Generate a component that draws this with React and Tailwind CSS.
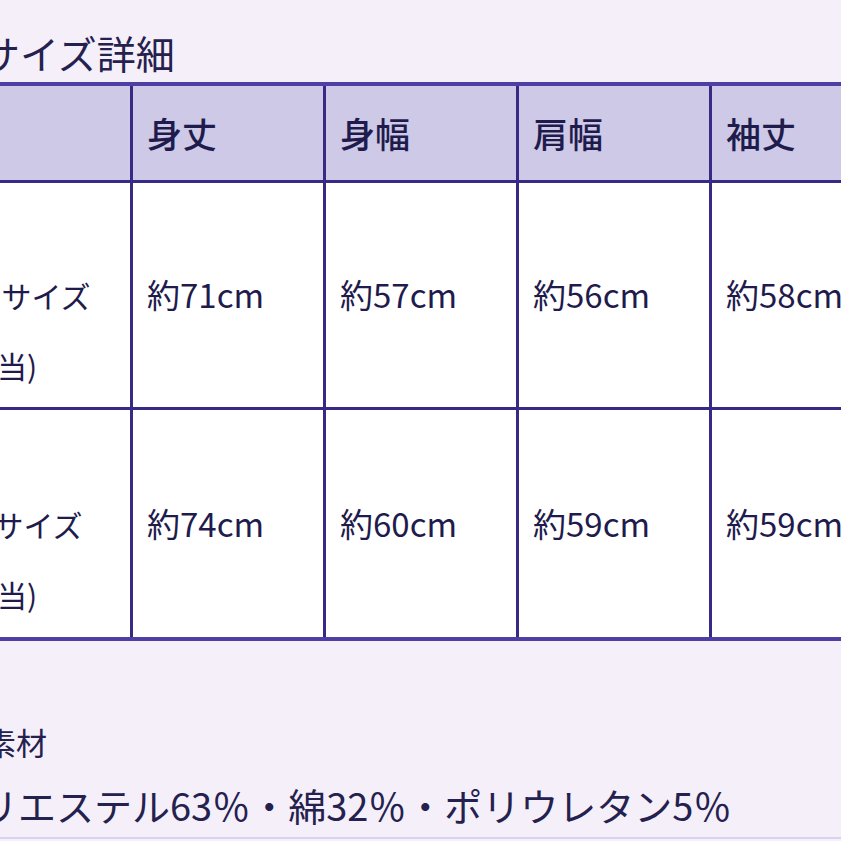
const cols = ['身丈', '身幅', '肩幅', '袖丈'];

const rows = [
    { lines: ['M', '(Mサイズ', '相当)'], values: ['約71cm', '約57cm', '約56cm', '約58cm'] },
    { lines: ['L', '(Lサイズ', '相当)'], values: ['約74cm', '約60cm', '約59cm', '約59cm'] },
];

const font = { fontFamily: '"Noto Sans CJK JP", "Noto Sans", sans-serif' };

export default function App() {
    return (
        <div className="w-[841px] h-[841px] overflow-hidden bg-[#f4eff9] text-[#1f1c4d]" style={font}>
            <div className="ml-[-47px] w-[1100px]">
                {/* Heading */}
                <h2 className="pt-[30px] pl-[28px] text-[39px] leading-[44px] font-normal text-[#24214f] whitespace-nowrap">
                    サイズ詳細
                </h2>

                {/* Size table */}
                <div className="mt-[8px] border-t-4 border-b-4 border-[#4d3fa3]">
                    {/* Header row */}
                    <div className="flex h-[97px] bg-[#cdc9e7] border-b-[3px] border-[#362a85]">
                        <div className="w-[180px] shrink-0 border-r-[3px] border-[#362a85]" />
                        {cols.map((c) => (
                            <div
                                key={c}
                                className="w-[193px] shrink-0 flex items-center pl-[14px] text-[35px] font-medium border-r-[3px] border-[#362a85]"
                            >
                                {c}
                            </div>
                        ))}
                    </div>

                    {/* Body rows */}
                    {rows.map((r, i) => (
                        <div
                            key={i}
                            className={`flex h-[227px] bg-white ${i === 0 ? 'border-b-[3px] border-[#362a85]' : ''}`}
                        >
                            <div className="w-[180px] shrink-0 flex flex-col justify-center pl-[14px] text-[30px] leading-[70px] border-r-[3px] border-[#362a85] whitespace-nowrap">
                                {r.lines.map((l) => (
                                    <span key={l}>{l}</span>
                                ))}
                            </div>
                            {r.values.map((v, j) => (
                                <div
                                    key={j}
                                    className="w-[193px] shrink-0 flex items-center pl-[14px] text-[33px] border-r-[3px] border-[#362a85] whitespace-nowrap"
                                >
                                    {v}
                                </div>
                            ))}
                        </div>
                    ))}
                </div>

                {/* Material */}
                <div className="mt-[81px] pl-[32px] text-[31px] leading-[40px] text-[#24214f]">
                    素材
                </div>
                <div className="mt-[21px] ml-[-11px] text-[38px] leading-[44px] text-[#24214f] whitespace-nowrap">
                    ポリエステル63％・綿32％・ポリウレタン5％
                </div>
                <div className="mt-[10px] h-[2px] bg-[#d9d1f0]" />
            </div>
        </div>
    );
}
